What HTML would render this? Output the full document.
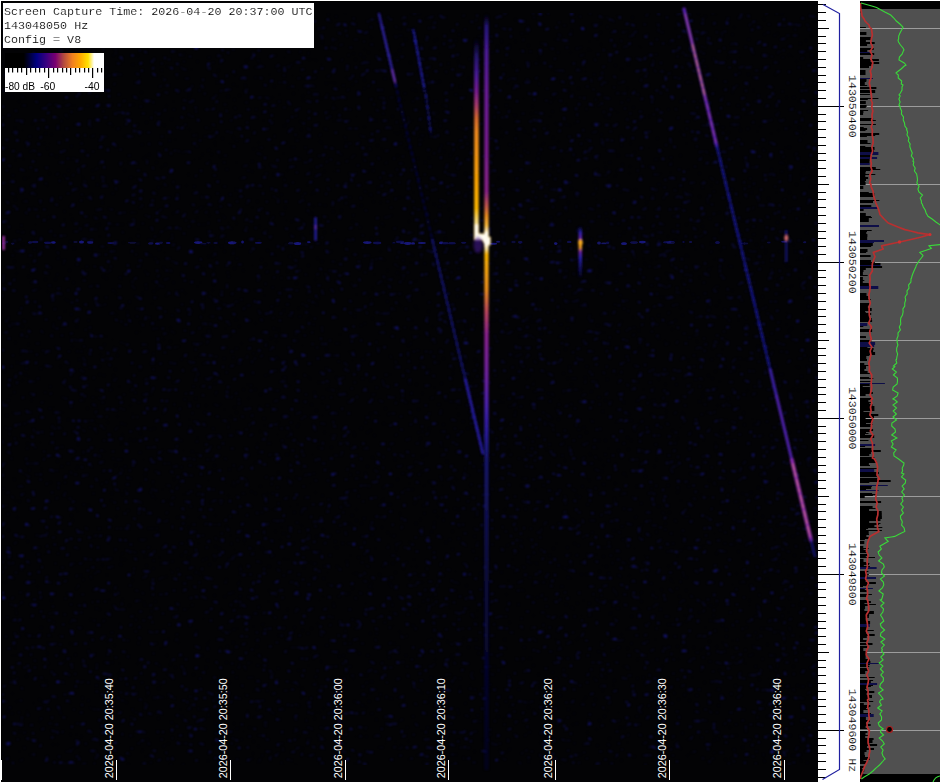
<!DOCTYPE html><html><head><meta charset="utf-8"><style>html,body{margin:0;padding:0;background:#fff;width:941px;height:783px;overflow:hidden}svg{display:block}text{white-space:pre}</style></head><body><svg width="941" height="783" viewBox="0 0 941 783"><defs><filter id="bl" x="-50%" y="-50%" width="200%" height="200%"><feGaussianBlur stdDeviation="0.7"/></filter><filter id="bl2" x="-50%" y="-50%" width="200%" height="200%"><feGaussianBlur stdDeviation="1.2"/></filter><linearGradient id="cbar" x1="0" x2="1" y1="0" y2="0"><stop offset="0" stop-color="#000"/><stop offset="0.19" stop-color="#000"/><stop offset="0.32" stop-color="#000080"/><stop offset="0.42" stop-color="#3a0080"/><stop offset="0.51" stop-color="#7a0070"/><stop offset="0.59" stop-color="#b04840"/><stop offset="0.68" stop-color="#f08020"/><stop offset="0.76" stop-color="#ffa800"/><stop offset="0.84" stop-color="#ffe000"/><stop offset="0.90" stop-color="#ffffff"/><stop offset="1" stop-color="#fff"/></linearGradient></defs><rect x="0" y="0" width="941" height="783" fill="#ffffff"/><rect x="1" y="1" width="817" height="781" fill="#000"/><rect x="2" y="2" width="816" height="780" fill="#030305"/><rect x="0" y="760" width="2" height="20" fill="#fff"/><defs><clipPath id="wc"><rect x="2" y="2" width="816" height="780"/></clipPath></defs><g clip-path="url(#wc)"><filter id="nz" x="0" y="0" width="100%" height="100%" color-interpolation-filters="sRGB"><feTurbulence type="fractalNoise" baseFrequency="0.16 0.26" numOctaves="2" seed="5" result="t"/><feColorMatrix in="t" type="matrix" values="0 0 0 0 0.08  0 0 0 0 0.08  0 0 0 0 0.5  1 0 0 0 0" result="c"/><feComponentTransfer in="c"><feFuncA type="linear" slope="6" intercept="-4.1"/></feComponentTransfer><feGaussianBlur stdDeviation="0.9"/></filter><rect x="2" y="13" width="816" height="752" fill="#000" filter="url(#nz)"/><filter id="hb" x="-5%" y="-200%" width="110%" height="500%"><feGaussianBlur stdDeviation="0.6"/></filter><g filter="url(#hb)"><ellipse cx="4.0" cy="243.4" rx="2.0" ry="1.3" fill="#0a0a36"/><ellipse cx="6.7" cy="242.0" rx="1.7" ry="1.2" fill="#0a0a36"/><ellipse cx="12.8" cy="243.7" rx="1.8" ry="1.1" fill="#0a0a36"/><ellipse cx="30.2" cy="242.4" rx="2.2" ry="1.2" fill="#0e0e4c"/><ellipse cx="35.2" cy="242.0" rx="3.2" ry="1.2" fill="#0e0e4c"/><ellipse cx="47.6" cy="242.8" rx="3.6" ry="1.2" fill="#0e0e4c"/><ellipse cx="53.4" cy="242.5" rx="2.4" ry="1.2" fill="#181878"/><ellipse cx="75.5" cy="242.0" rx="2.5" ry="1.1" fill="#0a0a36"/><ellipse cx="81.5" cy="241.9" rx="2.5" ry="1.5" fill="#181878"/><ellipse cx="90.2" cy="242.5" rx="3.2" ry="1.4" fill="#121262"/><ellipse cx="110.5" cy="243.1" rx="3.5" ry="0.8" fill="#121262"/><ellipse cx="132.3" cy="242.8" rx="4.3" ry="1.0" fill="#0a0a36"/><ellipse cx="150.8" cy="243.4" rx="2.8" ry="1.2" fill="#0e0e4c"/><ellipse cx="157.7" cy="243.7" rx="2.7" ry="1.1" fill="#181878"/><ellipse cx="161.0" cy="242.8" rx="2.0" ry="1.3" fill="#0a0a36"/><ellipse cx="168.3" cy="243.0" rx="2.3" ry="0.9" fill="#121262"/><ellipse cx="198.2" cy="242.6" rx="4.2" ry="1.3" fill="#181878"/><ellipse cx="203.4" cy="243.8" rx="3.4" ry="0.8" fill="#0a0a36"/><ellipse cx="208.5" cy="242.9" rx="2.5" ry="0.8" fill="#0a0a36"/><ellipse cx="215.6" cy="243.0" rx="2.6" ry="0.8" fill="#0e0e4c"/><ellipse cx="232.0" cy="242.8" rx="4.0" ry="1.5" fill="#181878"/><ellipse cx="234.8" cy="242.8" rx="1.8" ry="1.0" fill="#121262"/><ellipse cx="242.6" cy="242.1" rx="1.6" ry="1.5" fill="#121262"/><ellipse cx="258.4" cy="242.8" rx="3.4" ry="0.9" fill="#121262"/><ellipse cx="291.0" cy="243.4" rx="3.0" ry="1.3" fill="#0a0a36"/><ellipse cx="297.6" cy="243.4" rx="3.6" ry="1.5" fill="#181878"/><ellipse cx="308.8" cy="242.2" rx="1.8" ry="1.1" fill="#121262"/><ellipse cx="367.3" cy="242.6" rx="4.3" ry="1.3" fill="#181878"/><ellipse cx="377.2" cy="243.0" rx="4.2" ry="1.4" fill="#0e0e4c"/><ellipse cx="393.9" cy="242.9" rx="1.9" ry="0.8" fill="#0a0a36"/><ellipse cx="400.1" cy="241.9" rx="4.1" ry="1.4" fill="#0e0e4c"/><ellipse cx="402.2" cy="242.9" rx="2.2" ry="1.2" fill="#121262"/><ellipse cx="407.7" cy="243.5" rx="3.7" ry="1.4" fill="#181878"/><ellipse cx="413.0" cy="243.4" rx="2.0" ry="1.2" fill="#181878"/><ellipse cx="421.9" cy="243.0" rx="3.9" ry="0.9" fill="#181878"/><ellipse cx="441.3" cy="242.9" rx="2.3" ry="1.3" fill="#181878"/><ellipse cx="445.3" cy="243.2" rx="3.3" ry="1.2" fill="#0e0e4c"/><ellipse cx="451.9" cy="243.2" rx="3.9" ry="1.2" fill="#0e0e4c"/><ellipse cx="463.7" cy="242.7" rx="2.7" ry="1.0" fill="#0e0e4c"/><ellipse cx="485.9" cy="242.6" rx="1.9" ry="1.1" fill="#0a0a36"/><ellipse cx="493.5" cy="243.8" rx="3.5" ry="1.0" fill="#181878"/><ellipse cx="498.1" cy="241.8" rx="2.1" ry="1.0" fill="#121262"/><ellipse cx="513.5" cy="242.0" rx="2.5" ry="1.2" fill="#0a0a36"/><ellipse cx="520.3" cy="242.3" rx="2.3" ry="1.4" fill="#0e0e4c"/><ellipse cx="555.7" cy="243.6" rx="1.7" ry="1.3" fill="#181878"/><ellipse cx="569.3" cy="241.9" rx="2.3" ry="1.2" fill="#0e0e4c"/><ellipse cx="599.0" cy="242.9" rx="2.0" ry="1.5" fill="#121262"/><ellipse cx="604.0" cy="243.4" rx="3.0" ry="0.9" fill="#121262"/><ellipse cx="607.6" cy="242.8" rx="1.6" ry="1.2" fill="#0e0e4c"/><ellipse cx="624.0" cy="243.7" rx="3.0" ry="1.4" fill="#181878"/><ellipse cx="634.0" cy="242.6" rx="4.0" ry="1.3" fill="#0e0e4c"/><ellipse cx="642.4" cy="242.1" rx="3.4" ry="1.4" fill="#181878"/><ellipse cx="665.4" cy="242.3" rx="2.4" ry="1.1" fill="#0e0e4c"/><ellipse cx="670.4" cy="242.3" rx="4.4" ry="1.5" fill="#121262"/><ellipse cx="673.0" cy="242.7" rx="2.0" ry="1.0" fill="#0a0a36"/><ellipse cx="683.5" cy="242.1" rx="1.5" ry="1.0" fill="#0a0a36"/><ellipse cx="690.6" cy="242.0" rx="1.6" ry="1.0" fill="#0e0e4c"/><ellipse cx="717.5" cy="242.4" rx="2.5" ry="1.5" fill="#0e0e4c"/><ellipse cx="744.6" cy="243.5" rx="3.6" ry="1.2" fill="#0a0a36"/><ellipse cx="768.9" cy="242.6" rx="1.9" ry="1.1" fill="#0a0a36"/><ellipse cx="784.1" cy="241.8" rx="3.1" ry="1.0" fill="#121262"/><ellipse cx="804.7" cy="242.3" rx="1.7" ry="1.0" fill="#0e0e4c"/></g><defs><linearGradient id="gL" gradientUnits="userSpaceOnUse" x1="0" x2="0" y1="38" y2="239"><stop offset="0.0000" stop-color="#100c60" stop-opacity="0"/><stop offset="0.0846" stop-color="#2a1880" stop-opacity="0.8"/><stop offset="0.1841" stop-color="#4a1a98" stop-opacity="1"/><stop offset="0.2687" stop-color="#7a1e90" stop-opacity="1"/><stop offset="0.3333" stop-color="#a83a70" stop-opacity="1"/><stop offset="0.3980" stop-color="#d86a30" stop-opacity="1"/><stop offset="0.4677" stop-color="#f08a20" stop-opacity="1"/><stop offset="0.7313" stop-color="#ffa800" stop-opacity="1"/><stop offset="0.8458" stop-color="#ffb800" stop-opacity="1"/><stop offset="0.8955" stop-color="#ffd860" stop-opacity="1"/><stop offset="0.9353" stop-color="#fff0b0" stop-opacity="1"/><stop offset="1.0000" stop-color="#fff4d0" stop-opacity="1"/></linearGradient><linearGradient id="gR" gradientUnits="userSpaceOnUse" x1="0" x2="0" y1="14" y2="770"><stop offset="0.0000" stop-color="#100c60" stop-opacity="0"/><stop offset="0.0159" stop-color="#2a1890" stop-opacity="0.85"/><stop offset="0.0476" stop-color="#4a1a98" stop-opacity="1"/><stop offset="0.1005" stop-color="#6a1a98" stop-opacity="1"/><stop offset="0.1799" stop-color="#7a1e90" stop-opacity="1"/><stop offset="0.2354" stop-color="#8a2488" stop-opacity="1"/><stop offset="0.2540" stop-color="#c85a50" stop-opacity="1"/><stop offset="0.2672" stop-color="#f09020" stop-opacity="1"/><stop offset="0.2804" stop-color="#ffc040" stop-opacity="1"/><stop offset="0.2884" stop-color="#fff8e0" stop-opacity="1"/><stop offset="0.3082" stop-color="#fff8e0" stop-opacity="1"/><stop offset="0.3175" stop-color="#ffb800" stop-opacity="1"/><stop offset="0.3651" stop-color="#f09020" stop-opacity="1"/><stop offset="0.3942" stop-color="#c04860" stop-opacity="1"/><stop offset="0.4246" stop-color="#8a2090" stop-opacity="1"/><stop offset="0.4841" stop-color="#6a20a0" stop-opacity="1"/><stop offset="0.5172" stop-color="#4a20b0" stop-opacity="1"/><stop offset="0.5503" stop-color="#3020b0" stop-opacity="0.9"/><stop offset="0.5899" stop-color="#2020a0" stop-opacity="0.65"/><stop offset="0.7222" stop-color="#16168a" stop-opacity="0.45"/><stop offset="1.0000" stop-color="#0c0c50" stop-opacity="0.3"/></linearGradient><filter id="b1" x="-20%" y="-20%" width="140%" height="140%"><feGaussianBlur stdDeviation="0.9"/></filter><filter id="b2" x="-50%" y="-50%" width="200%" height="200%"><feGaussianBlur stdDeviation="1.6"/></filter></defs><g filter="url(#b1)"><line x1="379.0" y1="14" x2="394.6" y2="80" stroke="#2a1ea8" stroke-width="2.6" opacity="0.8" stroke-dasharray="6 1 3 1" stroke-linecap="round"/><line x1="381.4" y1="24" x2="393.7" y2="76" stroke="#4030c0" stroke-width="1.0" opacity="0.8" stroke-linecap="round"/><line x1="392.2" y1="70" x2="395.1" y2="82" stroke="#6a30b0" stroke-width="2.2" opacity="1" stroke-linecap="round"/><line x1="395.5" y1="84" x2="432.4" y2="240" stroke="#121280" stroke-width="2.0" opacity="0.45" stroke-dasharray="3 4" stroke-linecap="round"/><line x1="432.4" y1="240" x2="465.5" y2="380" stroke="#1a1a98" stroke-width="2.6" opacity="0.7" stroke-dasharray="4 3" stroke-linecap="round"/><line x1="465.5" y1="380" x2="483.0" y2="454" stroke="#2820b4" stroke-width="2.8" opacity="0.9" stroke-dasharray="5 2" stroke-linecap="round"/><polyline points="413,29 426,96 431,134" fill="none" stroke="#1a1a9a" stroke-width="2.4" stroke-dasharray="5 2 2 2" opacity="0.8"/><polyline points="414,32 424,88" fill="none" stroke="#2420b0" stroke-width="2" opacity="0.65"/><line x1="684.0" y1="9" x2="716.8" y2="146" stroke="#5a22b8" stroke-width="3.2" opacity="1" stroke-linecap="round"/><line x1="685.2" y1="14" x2="692.6" y2="45" stroke="#a04aa0" stroke-width="1.4" opacity="0.9" stroke-linecap="round"/><line x1="692.6" y1="45" x2="704.6" y2="95" stroke="#d87a70" stroke-width="1.4" opacity="0.95" stroke-dasharray="7 2 4 2" stroke-linecap="round"/><line x1="704.6" y1="95" x2="715.8" y2="142" stroke="#9a40a8" stroke-width="1.3" opacity="0.85" stroke-dasharray="6 3" stroke-linecap="round"/><line x1="716.8" y1="146" x2="770.3" y2="370" stroke="#1c1ca4" stroke-width="2.8" opacity="0.8" stroke-dasharray="5 2 2 3" stroke-linecap="round"/><line x1="770.3" y1="370" x2="791.9" y2="460" stroke="#4222b8" stroke-width="3.0" opacity="0.9" stroke-linecap="round"/><line x1="776.3" y1="395" x2="791.4" y2="458" stroke="#6a2ab8" stroke-width="1.2" opacity="0.85" stroke-linecap="round"/><line x1="791.9" y1="460" x2="811.0" y2="540" stroke="#8a2ab0" stroke-width="3.8" opacity="1" stroke-linecap="round"/><line x1="792.8" y1="464" x2="810.0" y2="536" stroke="#d87080" stroke-width="1.3" opacity="0.9" stroke-dasharray="7 2 4 3" stroke-linecap="round"/><line x1="811.0" y1="540" x2="814.8" y2="556" stroke="#1e1e98" stroke-width="2.5" opacity="0.7" stroke-linecap="round"/></g><g filter="url(#b1)"><rect x="474.2" y="38" width="4.5" height="201" fill="url(#gL)"/><rect x="484.4" y="14" width="4.2" height="756" fill="url(#gR)"/><path d="M474.4 224h4.2v9.5l5.8 0.5v-3h4v6h2v8h-2v2h-4v-3l-2.5-4h-7.5z" fill="#fffcf0" stroke="#ffd060" stroke-width="0.6"/></g><ellipse cx="478" cy="245" rx="4.5" ry="8" fill="#4a1a98" opacity="0.55" filter="url(#b2)"/><g filter="url(#b1)"><defs><linearGradient id="gB" gradientUnits="userSpaceOnUse" x1="0" x2="0" y1="226" y2="277"><stop offset="0" stop-color="#1a1a90" stop-opacity="0"/><stop offset="0.12" stop-color="#2a20b0"/><stop offset="0.25" stop-color="#6a20a8"/><stop offset="0.32" stop-color="#e08a30"/><stop offset="0.42" stop-color="#f0a020"/><stop offset="0.5" stop-color="#7020a0"/><stop offset="0.62" stop-color="#2a20b0"/><stop offset="1" stop-color="#14148a" stop-opacity="0.2"/></linearGradient></defs><rect x="578.6" y="226" width="3.4" height="51" fill="url(#gB)"/><ellipse cx="580.5" cy="242.5" rx="2.2" ry="3" fill="#ffb020"/><rect x="314.2" y="217" width="2.8" height="24" rx="1.2" fill="#2420a8" opacity="0.85"/><ellipse cx="315.6" cy="227" rx="1.2" ry="2.5" fill="#6a30b0" opacity="0.8"/><rect x="785" y="230" width="2.5" height="32" fill="#1a1a90" opacity="0.7"/><ellipse cx="786.3" cy="238" rx="2" ry="3" fill="#d06a70"/><rect x="2" y="236" width="3" height="14" fill="#8a2a90"/></g></g><rect x="116" y="760" width="1" height="20" fill="#fff"/><text transform="translate(112.8,778.3) rotate(-90)" font-family="Liberation Sans" font-size="10.8" fill="#fff" textLength="100" lengthAdjust="spacingAndGlyphs">2026-04-20 20:35:40</text><rect x="230" y="760" width="1" height="20" fill="#fff"/><text transform="translate(226.8,778.3) rotate(-90)" font-family="Liberation Sans" font-size="10.8" fill="#fff" textLength="100" lengthAdjust="spacingAndGlyphs">2026-04-20 20:35:50</text><rect x="345" y="760" width="1" height="20" fill="#fff"/><text transform="translate(341.8,778.3) rotate(-90)" font-family="Liberation Sans" font-size="10.8" fill="#fff" textLength="100" lengthAdjust="spacingAndGlyphs">2026-04-20 20:36:00</text><rect x="448" y="760" width="1" height="20" fill="#fff"/><text transform="translate(444.8,778.3) rotate(-90)" font-family="Liberation Sans" font-size="10.8" fill="#fff" textLength="100" lengthAdjust="spacingAndGlyphs">2026-04-20 20:36:10</text><rect x="555" y="760" width="1" height="20" fill="#fff"/><text transform="translate(551.8,778.3) rotate(-90)" font-family="Liberation Sans" font-size="10.8" fill="#fff" textLength="100" lengthAdjust="spacingAndGlyphs">2026-04-20 20:36:20</text><rect x="669" y="760" width="1" height="20" fill="#fff"/><text transform="translate(665.8,778.3) rotate(-90)" font-family="Liberation Sans" font-size="10.8" fill="#fff" textLength="100" lengthAdjust="spacingAndGlyphs">2026-04-20 20:36:30</text><rect x="784" y="760" width="1" height="20" fill="#fff"/><text transform="translate(780.8,778.3) rotate(-90)" font-family="Liberation Sans" font-size="10.8" fill="#fff" textLength="100" lengthAdjust="spacingAndGlyphs">2026-04-20 20:36:40</text><rect x="3" y="3" width="311" height="45" fill="#fff"/><g font-family="Liberation Mono" font-size="11.7" fill="#000" stroke="#fff" stroke-width="0.15"><text x="4" y="15">Screen Capture Time: 2026-04-20 20:37:00 UTC</text><text x="4" y="29">143048050 Hz</text><text x="4" y="43">Config = V8</text></g><rect x="5" y="68" width="99" height="24" fill="#fff"/><rect x="5" y="53" width="99" height="15" fill="url(#cbar)"/><path fill="#000" d="M8 68h1.2v4.5h-1.2zM12 68h1.2v4.5h-1.2zM17 68h1.2v4.5h-1.2zM21 68h1.2v4.5h-1.2zM26 68h1.2v7h-1.2zM30 68h1.2v4.5h-1.2zM35 68h1.2v4.5h-1.2zM39 68h1.2v4.5h-1.2zM44 68h1.2v4.5h-1.2zM48 68h1.2v10h-1.2zM53 68h1.2v4.5h-1.2zM57 68h1.2v4.5h-1.2zM62 68h1.2v4.5h-1.2zM66 68h1.2v4.5h-1.2zM70 68h1.2v7h-1.2zM75 68h1.2v4.5h-1.2zM79 68h1.2v4.5h-1.2zM84 68h1.2v4.5h-1.2zM88 68h1.2v4.5h-1.2zM92 68h1.2v10h-1.2zM97 68h1.2v4.5h-1.2zM101 68h1.2v4.5h-1.2z"/><g font-family="Liberation Sans" font-size="11.3" fill="#000"><text x="5" y="90" textLength="30" lengthAdjust="spacingAndGlyphs">-80 dB</text><text x="40.3" y="90" textLength="15" lengthAdjust="spacingAndGlyphs">-60</text><text x="84.6" y="90" textLength="15" lengthAdjust="spacingAndGlyphs">-40</text></g><path fill="#000" d="M818 4h8v1h-8zM818 12h8v1h-8zM818 20h8v1h-8zM818 28h11v1h-11zM818 36h8v1h-8zM818 43h8v1h-8zM818 51h8v1h-8zM818 59h8v1h-8zM818 67h8v1h-8zM818 75h8v1h-8zM818 82h8v1h-8zM818 90h8v1h-8zM818 98h8v1h-8zM818 106h26v1h-26zM818 114h8v1h-8zM818 121h8v1h-8zM818 129h8v1h-8zM818 137h8v1h-8zM818 145h8v1h-8zM818 153h8v1h-8zM818 160h8v1h-8zM818 168h8v1h-8zM818 176h8v1h-8zM818 184h11v1h-11zM818 192h8v1h-8zM818 199h8v1h-8zM818 207h8v1h-8zM818 215h8v1h-8zM818 223h8v1h-8zM818 231h8v1h-8zM818 238h8v1h-8zM818 246h8v1h-8zM818 254h8v1h-8zM818 262h26v1h-26zM818 270h8v1h-8zM818 277h8v1h-8zM818 285h8v1h-8zM818 293h8v1h-8zM818 301h8v1h-8zM818 309h8v1h-8zM818 316h8v1h-8zM818 324h8v1h-8zM818 332h8v1h-8zM818 340h11v1h-11zM818 348h8v1h-8zM818 355h8v1h-8zM818 363h8v1h-8zM818 371h8v1h-8zM818 379h8v1h-8zM818 387h8v1h-8zM818 394h8v1h-8zM818 402h8v1h-8zM818 410h8v1h-8zM818 418h26v1h-26zM818 426h8v1h-8zM818 433h8v1h-8zM818 441h8v1h-8zM818 449h8v1h-8zM818 457h8v1h-8zM818 465h8v1h-8zM818 472h8v1h-8zM818 480h8v1h-8zM818 488h8v1h-8zM818 496h11v1h-11zM818 504h8v1h-8zM818 511h8v1h-8zM818 519h8v1h-8zM818 527h8v1h-8zM818 535h8v1h-8zM818 543h8v1h-8zM818 550h8v1h-8zM818 558h8v1h-8zM818 566h8v1h-8zM818 574h26v1h-26zM818 582h8v1h-8zM818 589h8v1h-8zM818 597h8v1h-8zM818 605h8v1h-8zM818 613h8v1h-8zM818 621h8v1h-8zM818 628h8v1h-8zM818 636h8v1h-8zM818 644h8v1h-8zM818 652h11v1h-11zM818 660h8v1h-8zM818 667h8v1h-8zM818 675h8v1h-8zM818 683h8v1h-8zM818 691h8v1h-8zM818 699h8v1h-8zM818 706h8v1h-8zM818 714h8v1h-8zM818 722h8v1h-8zM818 730h26v1h-26zM818 738h8v1h-8zM818 745h8v1h-8zM818 753h8v1h-8zM818 761h8v1h-8zM818 769h8v1h-8zM818 777h8v1h-8z"/><polyline points="823,4.5 839.5,13.5 839.5,769.5 822.5,779.5" fill="none" stroke="#2020a0" stroke-width="1.2"/><text transform="translate(849,106.3) rotate(90)" font-family="Liberation Mono" font-size="11.6" fill="#000" stroke="#fff" stroke-width="0.15" text-anchor="middle">143050400</text><text transform="translate(849,262.3) rotate(90)" font-family="Liberation Mono" font-size="11.6" fill="#000" stroke="#fff" stroke-width="0.15" text-anchor="middle">143050200</text><text transform="translate(849,418.2) rotate(90)" font-family="Liberation Mono" font-size="11.6" fill="#000" stroke="#fff" stroke-width="0.15" text-anchor="middle">143050000</text><text transform="translate(849,574.3) rotate(90)" font-family="Liberation Mono" font-size="11.6" fill="#000" stroke="#fff" stroke-width="0.15" text-anchor="middle">143049800</text><text transform="translate(849,730.4) rotate(90)" font-family="Liberation Mono" font-size="11.6" fill="#000" stroke="#fff" stroke-width="0.15" text-anchor="middle">143049600 Hz</text><rect x="860" y="1" width="80" height="781" fill="#000"/><rect x="860" y="9" width="80" height="765" fill="#505050"/><path fill="#9c9c9c" d="M860 28h80v1h-80zM860 106h80v1h-80zM860 184h80v1h-80zM860 262h80v1h-80zM860 340h80v1h-80zM860 418h80v1h-80zM860 496h80v1h-80zM860 574h80v1h-80zM860 652h80v1h-80zM860 730h80v1h-80z"/><g clip-path="url(#pc)"><defs><clipPath id="pc"><rect x="860" y="1" width="80" height="781"/></clipPath></defs><path fill="#000" d="M860 11h0.4v2h-0.4zM860 27h5.9v1h-5.9zM860 32h6.4v3h-6.4zM860 37h10.8v3h-10.8zM860 40h5.9v2h-5.9zM860 42h14.7v2h-14.7zM860 44h7.1v2h-7.1zM860 48h13.7v2h-13.7zM860 50h7.3v2h-7.3zM860 53h14.2v2h-14.2zM860 57h3.2v2h-3.2zM860 59h18.9v2h-18.9zM860 61h10.5v1h-10.5zM860 62h19.2v2h-19.2zM860 64h12.2v2h-12.2zM860 66h9.0v2h-9.0zM860 70h5.5v3h-5.5zM860 73h5.5v2h-5.5zM860 79h6.5v2h-6.5zM860 81h6.3v1h-6.3zM860 82h4.8v3h-4.8zM860 85h7.2v1h-7.2zM860 87h16.4v2h-16.4zM860 90h15.2v3h-15.2zM860 94h9.9v1h-9.9zM860 98h18.4v1h-18.4zM860 99h7.8v1h-7.8zM860 101h5.8v3h-5.8zM860 105h6.6v2h-6.6zM860 107h5.8v1h-5.8zM860 110h8.1v1h-8.1zM860 111h3.4v2h-3.4zM860 113h3.1v2h-3.1zM860 118h13.1v2h-13.1zM860 120h15.8v1h-15.8zM860 124h15.9v1h-15.9zM860 127h3.7v1h-3.7zM860 128h7.1v2h-7.1zM860 130h5.5v1h-5.5zM860 133h19.2v2h-19.2zM860 135h15.2v1h-15.2zM860 136h6.9v1h-6.9zM860 140h7.5v3h-7.5zM860 143h10.6v1h-10.6zM860 146h5.3v1h-5.3zM860 147h14.5v3h-14.5zM860 150h13.9v2h-13.9zM860 155h11.9v2h-11.9zM860 159h9.7v2h-9.7zM860 161h9.5v2h-9.5zM860 167h15.8v2h-15.8zM860 169h20.3v1h-20.3zM860 170h10.3v1h-10.3zM860 171h5.9v1h-5.9zM860 172h5.5v2h-5.5zM860 174h15.3v1h-15.3zM860 175h5.3v2h-5.3zM860 177h8.1v2h-8.1zM860 179h6.0v2h-6.0zM860 181h4.9v1h-4.9zM860 182h5.6v3h-5.6zM860 186h3.3v3h-3.3zM860 192h8.8v1h-8.8zM860 193h14.3v3h-14.3zM860 196h13.3v1h-13.3zM860 200h19.4v1h-19.4zM860 201h13.0v2h-13.0zM860 205h11.3v2h-11.3zM860 207h6.5v2h-6.5zM860 209h3.6v2h-3.6zM860 213h5.8v3h-5.8zM860 216h10.9v1h-10.9zM860 217h12.0v1h-12.0zM860 218h8.8v3h-8.8zM860 221h8.8v1h-8.8zM860 230h11.7v1h-11.7zM860 231h7.0v1h-7.0zM860 232h6.3v2h-6.3zM860 234h7.4v3h-7.4zM860 237h7.2v3h-7.2zM860 240h7.5v1h-7.5zM860 241h10.6v1h-10.6zM860 243h12.8v3h-12.8zM860 246h11.2v1h-11.2zM860 249h7.5v3h-7.5zM860 252h6.1v1h-6.1zM860 255h10.6v2h-10.6zM860 260h10.9v2h-10.9zM860 262h14.8v1h-14.8zM860 263h20.5v2h-20.5zM860 266h22.1v2h-22.1zM860 268h5.8v2h-5.8zM860 270h3.5v2h-3.5zM860 272h2.9v3h-2.9zM860 275h7.7v1h-7.7zM860 277h2.9v3h-2.9zM860 280h4.3v1h-4.3zM860 281h2.8v2h-2.8zM860 283h8.9v3h-8.9zM860 293h6.5v3h-6.5zM860 296h8.2v3h-8.2zM860 299h10.9v1h-10.9zM860 303h9.6v2h-9.6zM860 305h8.7v1h-8.7zM860 306h7.9v2h-7.9zM860 308h11.7v3h-11.7zM860 311h5.1v1h-5.1zM860 312h5.8v1h-5.8zM860 313h11.2v2h-11.2zM860 315h9.7v3h-9.7zM860 318h11.7v2h-11.7zM860 320h12.1v2h-12.1zM860 326h3.3v1h-3.3zM860 329h12.1v3h-12.1zM860 336h5.9v1h-5.9zM860 337h6.0v1h-6.0zM860 340h11.3v2h-11.3zM860 347h7.4v1h-7.4zM860 348h13.6v2h-13.6zM860 350h13.1v2h-13.1zM860 352h15.1v3h-15.1zM860 355h9.3v1h-9.3zM860 356h6.3v3h-6.3zM860 359h7.0v2h-7.0zM860 363h4.3v2h-4.3zM860 365h8.9v1h-8.9zM860 366h6.0v3h-6.0zM860 369h4.4v2h-4.4zM860 371h7.6v2h-7.6zM860 373h10.8v1h-10.8zM860 377h9.2v1h-9.2zM860 378h13.3v1h-13.3zM860 381h10.8v1h-10.8zM860 384h9.7v2h-9.7zM860 386h2.7v1h-2.7zM860 387h9.9v2h-9.9zM860 389h9.9v3h-9.9zM860 392h12.9v2h-12.9zM860 394h5.6v2h-5.6zM860 398h12.8v2h-12.8zM860 400h8.4v2h-8.4zM860 402h11.1v1h-11.1zM860 403h9.4v1h-9.4zM860 404h12.4v2h-12.4zM860 406h14.4v2h-14.4zM860 408h14.4v3h-14.4zM860 411h3.5v1h-3.5zM860 412h9.7v2h-9.7zM860 414h18.3v2h-18.3zM860 416h14.0v2h-14.0zM860 418h5.6v1h-5.6zM860 419h12.4v2h-12.4zM860 421h12.3v2h-12.3zM860 423h6.0v1h-6.0zM860 424h12.6v1h-12.6zM860 425h10.5v2h-10.5zM860 429h13.1v2h-13.1zM860 431h10.1v1h-10.1zM860 432h6.0v1h-6.0zM860 433h8.5v1h-8.5zM860 434h5.0v1h-5.0zM860 435h14.2v3h-14.2zM860 440h8.5v1h-8.5zM860 446h5.1v1h-5.1zM860 448h11.5v2h-11.5zM860 450h20.8v2h-20.8zM860 452h10.9v2h-10.9zM860 454h9.3v2h-9.3zM860 457h14.3v2h-14.3zM860 459h16.0v2h-16.0zM860 461h16.7v2h-16.7zM860 463h8.9v2h-8.9zM860 465h10.0v1h-10.0zM860 468h17.2v1h-17.2zM860 472h18.8v2h-18.8zM860 474h16.9v3h-16.9zM860 478h17.1v2h-17.1zM860 480h30.7v2h-30.7zM860 482h9.3v1h-9.3zM860 486h11.9v1h-11.9zM860 487h11.2v2h-11.2zM860 489h6.0v1h-6.0zM860 493h12.1v1h-12.1zM860 494h16.3v1h-16.3zM860 495h12.9v1h-12.9zM860 496h4.7v2h-4.7zM860 501h21.1v2h-21.1zM860 506h12.6v2h-12.6zM860 508h15.5v1h-15.5zM860 509h9.1v2h-9.1zM860 511h21.7v2h-21.7zM860 513h21.8v3h-21.8zM860 516h21.9v3h-21.9zM860 519h20.5v2h-20.5zM860 521h9.2v2h-9.2zM860 523h20.5v1h-20.5zM860 524h19.0v1h-19.0zM860 525h14.4v2h-14.4zM860 527h22.3v1h-22.3zM860 528h8.1v1h-8.1zM860 529h6.1v1h-6.1zM860 530h21.9v1h-21.9zM860 531h8.7v3h-8.7zM860 534h9.0v1h-9.0zM860 535h6.4v2h-6.4zM860 537h8.9v2h-8.9zM860 539h4.9v1h-4.9zM860 541h4.3v3h-4.3zM860 546h3.3v2h-3.3zM860 548h8.6v1h-8.6zM860 549h3.6v1h-3.6zM860 550h6.5v1h-6.5zM860 551h5.7v1h-5.7zM860 552h8.0v1h-8.0zM860 554h7.5v2h-7.5zM860 556h5.8v1h-5.8zM860 557h15.0v1h-15.0zM860 559h3.5v3h-3.5zM860 562h6.3v1h-6.3zM860 563h9.4v1h-9.4zM860 564h9.0v1h-9.0zM860 565h3.8v1h-3.8zM860 566h9.9v1h-9.9zM860 571h8.4v1h-8.4zM860 572h6.9v2h-6.9zM860 574h8.8v1h-8.8zM860 575h7.4v2h-7.4zM860 579h5.9v2h-5.9zM860 581h5.6v1h-5.6zM860 582h15.9v2h-15.9zM860 584h8.3v2h-8.3zM860 586h3.0v1h-3.0zM860 589h4.8v1h-4.8zM860 590h6.8v2h-6.8zM860 594h11.9v1h-11.9zM860 595h6.4v2h-6.4zM860 600h6.6v1h-6.6zM860 601h10.9v2h-10.9zM860 603h4.5v1h-4.5zM860 604h15.9v1h-15.9zM860 605h8.3v1h-8.3zM860 606h5.1v3h-5.1zM860 609h4.4v2h-4.4zM860 611h13.9v3h-13.9zM860 614h9.1v2h-9.1zM860 616h8.9v2h-8.9zM860 618h5.8v3h-5.8zM860 621h10.1v3h-10.1zM860 627h6.6v3h-6.6zM860 630h13.8v1h-13.8zM860 631h7.3v1h-7.3zM860 632h6.4v2h-6.4zM860 634h14.7v2h-14.7zM860 636h6.8v2h-6.8zM860 638h3.1v2h-3.1zM860 640h6.6v2h-6.6zM860 643h12.5v2h-12.5zM860 646h7.4v2h-7.4zM860 648h3.3v3h-3.3zM860 651h6.1v2h-6.1zM860 653h6.3v3h-6.3zM860 656h5.6v3h-5.6zM860 659h9.8v2h-9.8zM860 661h10.4v2h-10.4zM860 664h9.9v1h-9.9zM860 665h8.3v1h-8.3zM860 666h9.3v1h-9.3zM860 668h8.4v3h-8.4zM860 671h5.2v3h-5.2zM860 677h14.7v1h-14.7zM860 680h13.1v1h-13.1zM860 681h10.8v2h-10.8zM860 685h13.0v1h-13.0zM860 686h10.9v1h-10.9zM860 687h6.6v2h-6.6zM860 689h5.2v1h-5.2zM860 690h6.0v1h-6.0zM860 691h14.3v2h-14.3zM860 693h6.6v2h-6.6zM860 695h12.0v3h-12.0zM860 698h8.9v3h-8.9zM860 701h13.2v1h-13.2zM860 703h3.8v2h-3.8zM860 705h10.4v2h-10.4zM860 707h8.9v1h-8.9zM860 708h6.0v1h-6.0zM860 709h8.8v1h-8.8zM860 710h3.4v3h-3.4zM860 713h11.0v1h-11.0zM860 717h5.9v3h-5.9zM860 720h9.7v2h-9.7zM860 722h6.2v2h-6.2zM860 724h10.7v2h-10.7zM860 726h5.6v2h-5.6zM860 728h6.9v1h-6.9zM860 731h7.3v2h-7.3zM860 733h5.5v2h-5.5zM860 735h8.8v1h-8.8zM860 736h5.2v2h-5.2zM860 738h13.6v2h-13.6zM860 740h12.5v3h-12.5zM860 743h9.4v1h-9.4zM860 744h17.1v2h-17.1zM860 746h7.1v2h-7.1zM860 748h14.0v2h-14.0zM860 750h6.5v2h-6.5zM860 752h4.5v3h-4.5zM860 755h5.0v2h-5.0zM860 757h9.7v3h-9.7zM860 760h3.5v1h-3.5zM860 761h6.4v3h-6.4zM860 766h5.0v1h-5.0zM860 767h4.4v1h-4.4zM860 768h1.9v1h-1.9zM860 769h4.2v3h-4.2zM860 772h3.1v2h-3.1z"/><path fill="#0e0e48" d="M860 52h9.6v1h-9.6zM860 78h13.0v1h-13.0zM860 152h18.4v3h-18.4zM860 157h17.1v2h-17.1zM860 163h9.7v2h-9.7zM860 242h14.0v1h-14.0zM860 265h20.5v1h-20.5zM860 286h18.3v3h-18.3zM860 323h7.3v3h-7.3zM860 342h15.1v3h-15.1zM860 345h14.2v2h-14.2zM860 383h24.9v1h-24.9zM860 444h15.1v2h-15.1zM860 469h14.2v3h-14.2zM860 485h27.8v1h-27.8zM860 490h18.6v1h-18.6zM860 567h16.6v2h-16.6zM860 577h16.0v2h-16.0zM860 588h12.9v1h-12.9zM860 624h9.8v3h-9.8zM860 663h20.5v1h-20.5zM860 683h17.1v2h-17.1zM860 714h13.7v3h-13.7zM860 207h18v2h-18zM860 225h19v2h-19zM860 240h24v2h-24z"/><polyline fill="none" stroke="#b83030" stroke-width="1.7" stroke-linejoin="round" points="860.5,3.0 860.6,7.0 861.0,10.0 861.2,11.0 861.9,15.0 862.0,16.0 864.1,19.0 865.0,21.0 866.9,23.0 869.0,25.0 869.5,27.0 871.6,29.0 871.7,31.0 872.4,35.0 871.3,39.0 870.8,43.0 872.7,47.0 871.0,50.0 870.2,51.0 872.1,55.0 870.8,59.0 872.9,63.0 872.0,65.0 872.2,67.0 870.3,71.0 871.2,75.0 870.8,79.0 870.0,80.0 869.3,83.0 870.2,87.0 870.7,91.0 871.3,95.0 871.7,99.0 871.0,100.0 872.4,103.0 871.7,107.0 872.8,111.0 872.0,115.0 872.2,119.0 871.6,120.0 872.7,123.0 871.1,127.0 872.4,130.0 872.4,131.0 872.2,135.0 873.0,139.0 873.1,143.0 871.9,147.0 872.7,151.0 871.2,155.0 870.8,159.0 870.8,161.5 871.4,163.0 870.9,167.0 872.2,171.0 869.9,175.0 870.7,179.0 869.6,183.0 870.8,184.0 871.2,187.0 873.0,191.0 873.5,195.0 874.5,199.0 875.0,199.7 875.8,203.0 877.6,207.0 879.1,211.0 880.0,214.6 880.4,215.0 884.1,219.0 888.2,223.0 898.0,227.0 904.8,229.6 910.6,231.0 918.0,232.9 930.0,234.6 928.3,235.0 921.4,237.0 913.1,239.0 899.8,242.0 894.8,243.0 881.6,245.8 882.0,247.0 883.2,249.0 877.5,251.0 873.3,252.4 874.3,255.0 875.0,256.6 874.0,259.0 872.7,263.0 872.4,263.2 872.2,267.0 872.3,271.0 869.8,275.0 870.1,279.0 869.6,283.0 870.1,287.0 869.7,291.0 868.8,295.0 869.1,296.4 869.2,299.0 870.3,303.0 869.1,307.0 869.2,311.0 869.3,315.0 870.3,319.0 868.7,323.0 871.5,327.0 869.7,331.0 870.2,335.0 871.4,339.0 870.8,339.6 869.2,343.0 871.9,347.0 870.1,351.0 871.0,355.0 870.0,357.8 870.0,359.0 868.8,363.0 869.5,367.0 869.3,371.0 871.7,375.0 871.6,379.0 871.1,383.0 871.7,387.0 871.1,391.0 870.1,395.0 872.5,399.0 871.0,400.0 871.9,403.0 870.5,407.0 871.1,411.0 869.9,415.0 872.9,419.0 871.5,423.0 871.6,427.0 870.3,431.0 872.9,435.0 870.7,439.0 872.4,443.0 872.6,447.0 872.5,451.0 873.4,455.0 872.4,458.0 874.6,459.0 876.6,463.0 877.6,467.0 877.2,471.0 877.0,475.0 879.5,479.0 878.2,479.5 877.7,483.0 876.6,487.0 876.6,490.0 876.7,491.0 876.1,495.0 875.7,499.0 877.2,503.0 876.1,507.0 878.0,511.0 877.8,515.0 876.7,519.0 877.2,523.0 877.6,527.0 877.4,528.0 878.7,531.0 879.0,531.4 872.4,535.0 870.0,536.4 869.0,539.0 867.5,543.0 867.2,547.0 866.5,551.0 868.2,555.0 867.3,559.0 867.2,563.0 867.4,567.0 866.6,569.6 865.6,571.0 866.4,575.0 865.6,579.0 868.5,583.0 866.7,587.0 867.5,591.0 867.6,595.0 866.4,599.0 867.5,599.5 868.1,603.0 868.7,607.0 868.7,611.0 866.3,615.0 866.6,619.0 867.3,623.0 867.7,627.0 866.3,631.0 868.4,635.0 868.4,639.0 866.7,643.0 868.4,647.0 866.4,651.0 866.2,655.0 868.9,659.0 867.0,663.0 867.1,667.0 868.6,671.0 866.7,675.0 868.6,679.0 868.1,683.0 867.0,687.0 868.1,691.0 868.0,695.0 868.7,699.0 867.5,700.0 868.4,703.0 867.7,707.0 868.9,711.0 868.8,715.0 869.4,719.0 867.0,723.0 867.2,727.0 869.4,731.0 868.8,735.0 868.1,739.0 868.1,743.0 869.4,747.0 869.9,751.0 869.0,755.0 868.8,758.3 868.2,759.0 866.5,763.0 865.0,765.7 864.3,767.0 863.0,771.0 861.4,775.0 860.8,776.4 860.5,779.0"/><polyline fill="none" stroke="#3ad83a" stroke-width="1.1" points="861.0,3.0 871.8,6.0 876.6,7.5 879.3,9.0 884.8,12.0 890.7,15.0 893.8,18.0 896.3,21.0 899.9,24.0 902.9,27.0 903.0,27.4 901.6,30.0 900.0,33.0 898.7,36.0 898.6,39.0 898.0,40.0 898.5,42.0 900.5,45.0 903.0,48.0 904.0,50.0 903.3,51.0 902.2,54.0 899.4,57.0 899.0,60.0 904.2,63.0 906.0,65.0 904.3,66.0 901.1,69.0 897.1,72.0 896.0,73.0 898.3,75.0 898.2,78.0 901.7,81.0 901.3,84.0 903.0,85.0 902.0,87.0 902.0,90.0 900.4,93.0 899.0,95.0 900.2,96.0 898.9,99.0 900.1,102.0 898.9,105.0 900.0,106.0 900.2,108.0 901.7,111.0 901.4,114.0 903.5,117.0 903.2,120.0 904.5,123.0 904.9,126.0 907.0,129.0 906.5,129.5 907.6,132.0 907.0,135.0 908.9,138.0 908.3,141.0 910.2,144.0 909.8,145.0 909.9,147.0 911.0,150.0 912.3,153.0 911.3,156.0 913.5,159.0 913.0,161.5 913.8,162.0 913.2,165.0 915.2,168.0 914.4,171.0 916.6,174.0 917.2,177.0 917.5,180.0 916.9,183.0 918.0,184.8 919.1,186.0 917.9,189.0 918.9,192.0 922.5,195.0 920.2,198.0 921.4,201.0 921.4,203.0 922.2,204.0 923.3,207.0 925.2,210.0 926.1,213.0 927.8,216.0 928.0,216.3 932.1,219.0 935.9,222.0 939.7,224.6 940.4,225.0 943.3,228.0 946.0,230.0 946.4,231.0 946.2,234.0 946.3,237.0 946.0,240.0 942.0,243.0 939.7,244.6 928.9,245.8 929.0,246.0 931.4,248.3 929.8,249.0 920.8,252.0 919.8,252.4 922.7,255.0 923.0,255.7 921.3,258.0 918.9,261.0 917.1,264.0 916.4,264.9 915.8,267.0 914.4,270.0 913.1,273.0 912.0,276.0 911.5,278.0 911.0,279.0 910.9,282.0 908.6,285.0 909.0,288.0 907.0,291.0 907.2,294.0 906.5,294.8 905.1,297.0 905.7,300.0 904.7,303.0 904.8,306.0 902.9,309.0 903.1,311.4 903.1,312.0 902.5,315.0 900.8,318.0 900.5,321.0 900.7,323.0 900.8,324.0 899.3,327.0 900.4,330.0 898.0,333.0 898.1,336.0 896.8,339.0 897.3,341.2 897.0,342.0 897.9,345.0 896.7,348.0 896.6,351.0 897.6,354.0 896.9,357.0 896.5,359.5 895.9,360.0 896.8,363.0 893.4,366.0 894.8,366.6 892.3,369.0 896.4,372.0 893.4,375.0 897.4,378.0 897.5,381.0 897.1,384.0 893.2,387.0 892.6,390.0 898.1,393.0 897.2,396.0 892.9,399.0 895.0,400.0 897.3,402.0 893.0,405.0 896.5,408.0 893.2,411.0 896.4,414.0 893.0,417.0 896.5,420.0 891.9,423.0 891.7,426.0 895.0,429.0 895.5,432.0 891.7,435.0 896.9,438.0 891.3,441.0 893.1,444.0 891.4,447.0 896.1,450.0 893.7,453.0 894.0,456.0 898.6,459.0 902.5,462.0 904.0,463.0 903.7,465.0 902.2,468.0 902.6,471.0 901.5,473.0 903.9,474.0 901.5,477.0 904.8,479.5 905.7,480.0 905.3,483.0 902.1,486.0 904.2,489.0 903.1,490.0 901.7,492.0 904.4,495.0 901.9,498.0 903.0,501.0 900.7,504.0 903.4,507.0 901.5,510.0 903.4,513.0 900.4,516.0 900.8,519.0 901.5,519.8 902.3,522.0 901.6,525.0 904.1,528.0 904.8,531.0 904.8,531.4 899.4,534.0 894.8,536.4 891.3,537.0 884.9,538.0 886.8,540.0 888.2,541.4 885.4,543.0 880.2,546.0 879.9,546.4 881.4,549.0 878.1,552.0 879.2,555.0 881.9,558.0 878.6,561.0 883.4,564.0 884.3,567.0 882.0,570.0 881.5,573.0 884.5,576.0 880.4,579.0 883.3,582.0 883.8,585.0 882.3,588.0 878.9,591.0 883.2,594.0 882.4,597.0 881.6,599.5 880.2,600.0 884.0,603.0 880.8,606.0 883.5,609.0 882.9,612.0 880.5,615.0 882.4,618.0 883.8,621.0 880.3,624.0 881.2,627.0 884.6,630.0 880.9,633.0 880.4,636.0 884.8,639.0 880.9,642.0 884.3,645.0 881.6,648.0 882.4,650.0 881.6,651.0 884.0,654.0 880.8,657.0 883.1,660.0 879.2,663.0 882.9,666.0 880.4,669.0 883.3,672.0 880.8,675.0 883.4,678.0 883.3,681.0 880.4,684.0 879.8,687.0 883.1,690.0 878.5,693.0 881.1,696.0 883.1,699.0 880.5,700.0 879.6,702.0 881.4,705.0 877.7,708.0 882.1,711.0 879.9,714.0 881.6,717.0 881.5,720.0 878.2,723.0 879.3,726.0 883.2,729.0 881.0,730.0 880.4,732.0 883.6,735.0 879.2,738.0 882.6,741.0 884.3,744.0 880.8,747.0 883.1,750.0 881.9,753.0 883.0,756.0 885.2,758.9 884.8,759.0 882.3,762.0 879.5,765.0 876.2,767.9 876.0,768.0 872.9,771.0 869.4,774.0 868.8,774.2 864.2,777.0 861.4,779.0"/><circle cx="930" cy="234.6" r="1.5" fill="#d03030"/><circle cx="899.5" cy="242" r="1.7" fill="#d03030"/><path d="M933 782q2-5 7-6" fill="none" stroke="#3ad83a" stroke-width="1.1"/><circle cx="889.5" cy="729.5" r="3" fill="#000" stroke="#b02020" stroke-width="1.2"/></g></svg></body></html>
